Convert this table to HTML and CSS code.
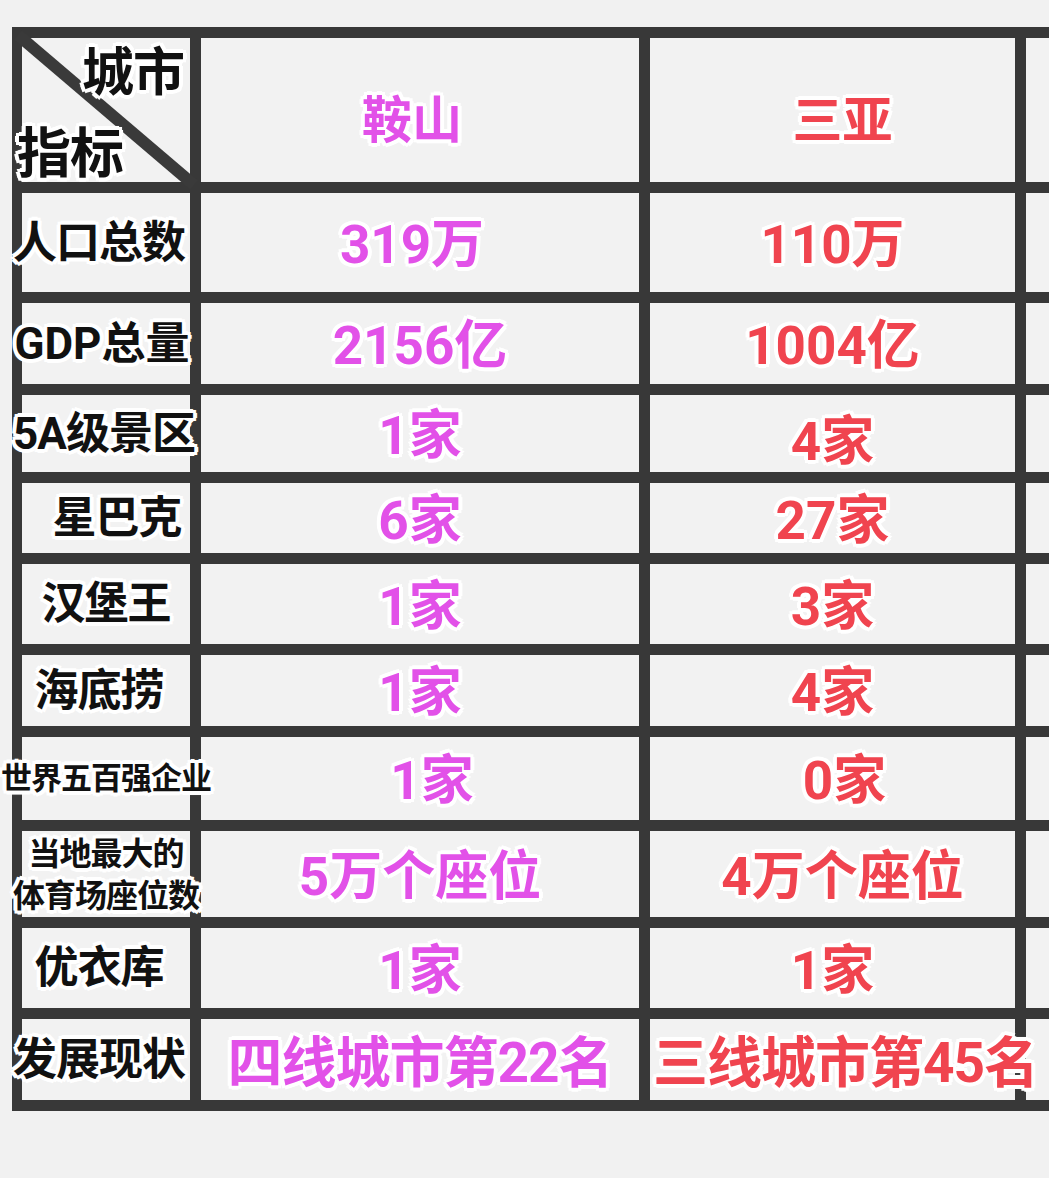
FILE: index.html
```html
<!DOCTYPE html>
<html lang="zh-CN">
<head>
<meta charset="utf-8">
<title>鞍山 vs 三亚</title>
<link rel="stylesheet" href="styles.css">
</head>
<body>
<div class="sheet">
  <div class="cell corner">
    <svg class="diag" viewBox="0 0 168 144" preserveAspectRatio="none" aria-hidden="true">
      <line x1="-4" y1="-3" x2="172" y2="147" stroke="#3a3a3a" stroke-width="12"/>
    </svg>
    <span class="txt lbl corner-top">城市</span>
    <span class="txt lbl corner-bottom">指标</span>
  </div>
  <div class="cell"><span class="txt val pink head nudge-l">鞍山</span></div>
  <div class="cell"><span class="txt val red head nudge-r">三亚</span></div>
  <div class="cell edge"></div>

  <div class="cell"><span class="txt lbl nudge-l">人口总数</span></div>
  <div class="cell"><span class="txt val pink nudge-l">319万</span></div>
  <div class="cell"><span class="txt val red">110万</span></div>
  <div class="cell edge"></div>

  <div class="cell"><span class="txt lbl gdp">GDP总量</span></div>
  <div class="cell"><span class="txt val pink">2156亿</span></div>
  <div class="cell"><span class="txt val red">1004亿</span></div>
  <div class="cell edge"></div>

  <div class="cell"><span class="txt lbl mid">5A级景区</span></div>
  <div class="cell"><span class="txt val pink">1家</span></div>
  <div class="cell"><span class="txt val red low">4家</span></div>
  <div class="cell edge"></div>

  <div class="cell"><span class="txt lbl shift-r">星巴克</span></div>
  <div class="cell"><span class="txt val pink">6家</span></div>
  <div class="cell"><span class="txt val red">27家</span></div>
  <div class="cell edge"></div>

  <div class="cell"><span class="txt lbl">汉堡王</span></div>
  <div class="cell"><span class="txt val pink">1家</span></div>
  <div class="cell"><span class="txt val red">3家</span></div>
  <div class="cell edge"></div>

  <div class="cell"><span class="txt lbl shift-l">海底捞</span></div>
  <div class="cell"><span class="txt val pink">1家</span></div>
  <div class="cell"><span class="txt val red">4家</span></div>
  <div class="cell edge"></div>

  <div class="cell"><span class="txt lbl small">世界五百强企业</span></div>
  <div class="cell"><span class="txt val pink shift-vr">1家</span></div>
  <div class="cell"><span class="txt val red shift-vr">0家</span></div>
  <div class="cell edge"></div>

  <div class="cell"><span class="txt lbl small two">当地最大的<br>体育场座位数</span></div>
  <div class="cell"><span class="txt val pink">5万个座位</span></div>
  <div class="cell"><span class="txt val red nudge-r">4万个座位</span></div>
  <div class="cell edge"></div>

  <div class="cell"><span class="txt lbl shift-l">优衣库</span></div>
  <div class="cell"><span class="txt val pink">1家</span></div>
  <div class="cell"><span class="txt val red">1家</span></div>
  <div class="cell edge"></div>

  <div class="cell"><span class="txt lbl nudge-l">发展现状</span></div>
  <div class="cell"><span class="txt val pink wide">四线城市第22名</span></div>
  <div class="cell"><span class="txt val red wide overflow-r">三线城市第45名</span></div>
  <div class="cell edge last"></div>
</div>
</body>
</html>
```

FILE: styles.css
```css
html, body {
  margin: 0;
  padding: 0;
  background: #f1f1f1;
}

body {
  font-family: Roboto, "Noto Sans CJK SC", "Noto Sans", sans-serif;
  overflow: hidden;
  height: 1178px;
}

.sheet {
  margin: 27px 0 0 12px;
  display: grid;
  grid-template-columns: 168px 438px 365px 23px;
  grid-template-rows: 144px 99px 81px 77px 70px 80px 71px 83px 86px 80px 81px;
  gap: 11px;
  padding: 11px 0 11px 10px;
  background: #383838;
  width: 1027px;
}

.cell {
  background: #f2f2f2;
  display: flex;
  align-items: center;
  justify-content: center;
  white-space: nowrap;
  min-width: 0;
}

.edge {
  background: #f2f2f2;
}

.txt {
  position: relative;
  z-index: 1;
  font-weight: 700;
  line-height: 1;
  text-shadow:
    4px 0 0 #fff, -4px 0 0 #fff, 0 4px 0 #fff, 0 -4px 0 #fff,
    3px 3px 0 #fff, -3px -3px 0 #fff, 3px -3px 0 #fff, -3px 3px 0 #fff,
    0 0 5px #fff;
}

.lbl {
  color: #111;
  font-size: 44px;
  letter-spacing: -1px;
}

.lbl.nudge-l {
  margin-left: -14px;
}

.lbl.gdp {
  font-size: 44px;
  margin-left: -8px;
  letter-spacing: 0;
}

.lbl.mid {
  font-size: 44px;
  margin-left: -4px;
  letter-spacing: -1px;
}

.lbl.shift-r {
  margin-left: 22px;
}

.lbl.shift-l {
  margin-left: -14px;
}

.lbl.small {
  font-size: 31px;
  letter-spacing: -1px;
}

.lbl.two {
  text-align: center;
  line-height: 1.3;
  font-size: 32px;
  margin-top: 4px;
}

.val {
  font-size: 53px;
  margin-top: 6px;
}

.val.nudge-l {
  margin-left: -16px;
}

.val.nudge-r {
  margin-left: 20px;
}

.val.head {
  font-size: 50px;
  margin-top: 22px;
}

.val.wide {
  font-size: 55px;
  letter-spacing: -1px;
  margin-top: 8px;
}

.val.overflow-r {
  margin-left: 26px;
  margin-right: 0;
}

.val.low {
  margin-top: 18px;
}

.val.shift-vr {
  margin-left: 24px;
}

.pink {
  color: #e251e8;
}

.red {
  color: #f0444f;
}

.corner {
  position: relative;
  flex-direction: column;
  align-items: stretch;
  justify-content: space-between;
  padding: 10px 6px 0 0;
}

.diag {
  position: absolute;
  left: 0;
  top: 0;
  width: 100%;
  height: 100%;
  overflow: visible;
}

.corner-top {
  align-self: flex-end;
  font-size: 52px;
}

.corner-bottom {
  align-self: flex-start;
  font-size: 54px;
  margin-left: -5px;
}
```
